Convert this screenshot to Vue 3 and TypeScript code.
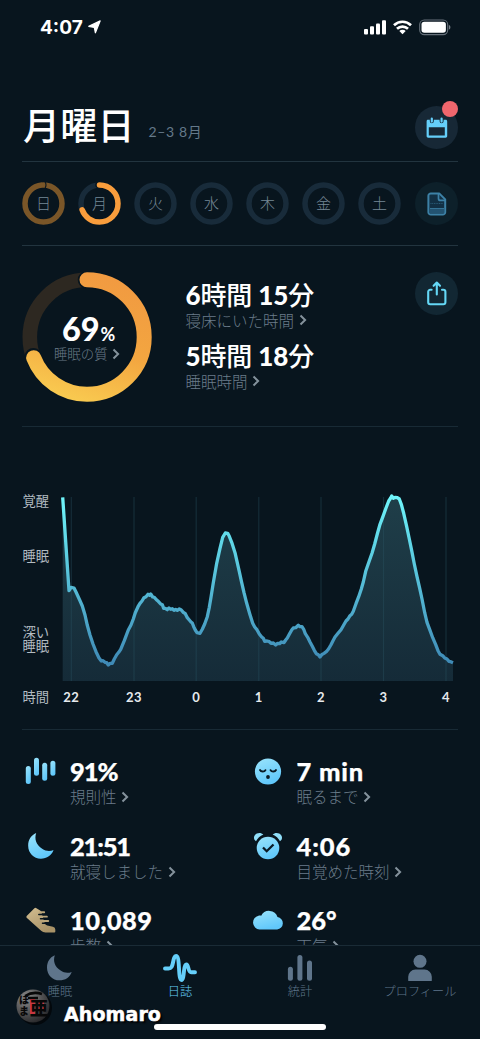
<script setup lang="ts">
interface Day { label: string; progress: number; tone: string }
interface Stat { icon: string; value: string; label: string }

const days: Day[] = [
  { label: '日', progress: 0.98, tone: '#7a5628' },
  { label: '月', progress: 0.69, tone: '#f99d3c' },
  { label: '火', progress: 0, tone: '' },
  { label: '水', progress: 0, tone: '' },
  { label: '木', progress: 0, tone: '' },
  { label: '金', progress: 0, tone: '' },
  { label: '土', progress: 0, tone: '' },
]

const stats: Stat[] = [
  { icon: 'bars', value: '91%', label: '規則性' },
  { icon: 'face', value: '7 min', label: '眠るまで' },
  { icon: 'moon', value: '21:51', label: '就寝しました' },
  { icon: 'alarm', value: '4:06', label: '目覚めた時刻' },
  { icon: 'shoe', value: '10,089', label: '歩数' },
  { icon: 'cloud', value: '26°', label: '天気' },
]

const tabs = [
  { icon: 'moon', label: '睡眠', active: false },
  { icon: 'wave', label: '日誌', active: true },
  { icon: 'stats', label: '統計', active: false },
  { icon: 'person', label: 'プロフィール', active: false },
]

const hours = [
  { x: 71.3, label: '22' }, { x: 134, label: '23' }, { x: 196.2, label: '0' },
  { x: 258.8, label: '1' }, { x: 321, label: '2' }, { x: 383.5, label: '3' }, { x: 446, label: '4' },
]

const ringLength = (r: number) => 2 * Math.PI * r
const dash = (p: number, r: number) => `${p * ringLength(r)} ${ringLength(r)}`

// Sleep depth samples: x and y in thirds of a pixel.
const samples: [number, number][] = [
  [188, 52], [207, 332], [213, 322], [222, 324], [228, 336], [240, 362], [247, 378], [255, 405], [262, 436], [270, 465],
  [279, 492], [288, 515], [297, 534], [304, 543], [309, 542], [315, 547], [320, 548], [325, 555], [330, 550], [337, 550],
  [343, 537], [350, 524], [356, 517], [362, 508], [373, 482], [385, 450], [393, 435], [400, 417], [406, 398], [414, 380],
  [420, 370], [426, 363], [432, 353], [438, 350], [444, 343], [448, 346], [452, 342], [458, 351], [463, 352], [470, 360],
  [475, 364], [482, 372], [487, 374], [491, 385], [496, 385], [502, 389], [507, 384], [512, 388], [517, 386], [522, 391],
  [527, 388], [532, 391], [538, 387], [544, 390], [550, 397], [556, 401], [562, 413], [568, 420], [573, 426], [577, 429],
  [581, 440], [586, 450], [591, 458], [600, 460], [607, 448], [614, 432], [622, 410], [628, 382], [633, 352], [640, 308],
  [650, 250], [660, 205], [668, 172], [676, 159], [683, 160], [688, 169], [695, 187], [705, 218], [718, 275], [725, 308],
  [732, 338], [740, 370], [749, 401], [758, 430], [764, 441], [770, 448], [778, 462], [785, 471], [790, 475], [794, 484],
  [801, 483], [808, 485], [813, 490], [820, 489], [827, 495], [833, 490], [839, 491], [844, 486], [852, 488], [857, 480],
  [862, 474], [868, 463], [875, 450], [880, 444], [887, 443], [895, 436], [900, 440], [906, 440], [911, 448], [916, 461],
  [923, 472], [930, 486], [937, 499], [943, 511], [949, 521], [955, 524], [960, 531], [965, 524], [972, 520], [979, 515],
  [986, 506], [993, 494], [999, 482], [1005, 471], [1014, 460], [1023, 449], [1031, 435], [1038, 423], [1044, 417],
  [1050, 407], [1055, 403], [1060, 394], [1068, 371], [1076, 350], [1084, 327], [1090, 306], [1097, 274], [1107, 245],
  [1116, 220], [1124, 192], [1132, 162], [1140, 133], [1149, 109], [1158, 84], [1166, 63], [1172, 54], [1175, 48],
  [1180, 55], [1185, 52], [1192, 53], [1198, 57], [1204, 73], [1211, 100], [1220, 140], [1228, 177], [1235, 212],
  [1243, 252], [1251, 290], [1259, 325], [1266, 357], [1274, 398], [1281, 427], [1290, 451], [1298, 473], [1307, 494],
  [1314, 512], [1320, 523], [1328, 527], [1334, 534], [1341, 537], [1347, 544], [1352, 545], [1359, 548],
]
const points = samples.map(([x, y]) => `${(x / 3).toFixed(1)},${(y / 3).toFixed(1)}`)
const curve = points.join(' ')
const area = `62.7,201 ${curve} 453,201`
</script>

<template>
  <main class="screen">
    <svg class="defs" width="0" height="0" aria-hidden="true">
      <defs>
        <linearGradient id="sky" x1="0" y1="0" x2="0.4" y2="1">
          <stop offset="0" stop-color="#9be4fb" /><stop offset="1" stop-color="#61c8fb" />
        </linearGradient>
        <linearGradient id="sand" x1="0" y1="0" x2="0.6" y2="1">
          <stop offset="0" stop-color="#d2bd90" /><stop offset="1" stop-color="#a99368" />
        </linearGradient>
      </defs>
    </svg>

    <div class="status">
      <span class="clock">4:07</span>
      <svg class="arrow" width="13" height="14" viewBox="0 0 13 14"><path d="M12.2.9 7.4 12.800 6.300 7.400.700 6.300Z" fill="#fff" stroke="#fff" stroke-width="1.200" stroke-linejoin="round" /></svg>
      <span class="grow"></span>
      <svg width="90" height="18" viewBox="0 0 90 18">
        <g fill="#fff">
          <rect x="0" y="10" width="4" height="5.400" rx="1" /><rect x="6" y="7.300" width="4" height="8.100" rx="1" />
          <rect x="12" y="4.400" width="4" height="11" rx="1" /><rect x="18" y="1.300" width="4" height="14.100" rx="1" />
          <path d="m38.500 15.300-3.200-3.200a4.600 4.600 0 0 1 6.400 0Z" />
        </g>
        <g fill="none" stroke="#fff" stroke-width="2.700">
          <path d="M30 6.200a12.200 12.200 0 0 1 17 0" /><path d="M33 9.800a8 8 0 0 1 11 0" />
        </g>
        <rect x="55.700" y="1" width="28" height="14.600" rx="4.600" fill="none" stroke="#66707a" stroke-width="1.100" />
        <rect x="57.500" y="2.800" width="24.400" height="11" rx="2.800" fill="#fff" />
        <path d="M84.900 6v4.600c1-.4 1.500-1.200 1.500-2.300s-.5-1.900-1.500-2.300Z" fill="#78828b" />
      </svg>
    </div>

    <header class="heading">
      <h1>月曜日</h1>
      <span class="date">2–3 8月</span>
      <span class="grow"></span>
      <button class="round calendar">
        <svg width="22" height="22" viewBox="0 0 22 22">
          <path fill-rule="evenodd" d="M2 2.800h1.800v1.500a2 2 0 0 0 4 0V2.800h5.800v1.500a2 2 0 0 0 4 0V2.800h2c1 0 1.600.7 1.600 1.600v14.700c0 1-.7 1.600-1.600 1.600H2.200c-1 0-1.600-.7-1.600-1.600V4.400C.6 3.500 1 2.800 2 2.800ZM2.800 10.200v8.200h16v-8.200Z" fill="#65cffa" />
          <path d="M5.800 1.600v3M15.600 1.600v3" stroke="#65cffa" stroke-width="2.200" stroke-linecap="round" />
        </svg>
        <i class="badge"></i>
      </button>
    </header>

    <section class="week">
      <div v-for="day in days" :key="day.label" class="day">
        <svg width="43" height="43" viewBox="0 0 43 43">
          <circle cx="21.500" cy="21.500" r="18.500" class="track" />
          <template v-if="day.progress">
            <circle cx="21.500" cy="21.500" r="18.500" fill="none" stroke="#08151e" stroke-width="6" stroke-linecap="round" :stroke-dasharray="dash(day.progress + 0.008, 18.5)" transform="rotate(-94 21.500 21.500)" />
            <circle cx="21.500" cy="21.500" r="18.500" fill="none" :stroke="day.tone" stroke-width="5.500" stroke-linecap="round" :stroke-dasharray="dash(day.progress, 18.5)" transform="rotate(-90 21.500 21.500)" />
          </template>
          <path v-if="day.progress > 0.9" d="M23.100 0c1.200 2 1.200 4 0 6" fill="none" stroke="#08151e" stroke-width="1.100" />
        </svg>
        <span>{{ day.label }}</span>
      </div>
      <button class="round note">
        <svg width="20" height="24" viewBox="0 0 20 24">
          <path d="M3.800 1.400h8.400l6 6v12.800a2.400 2.400 0 0 1-2.400 2.400H3.800a2.400 2.400 0 0 1-2.400-2.400V3.800a2.400 2.400 0 0 1 2.400-2.400Z" fill="#123044" stroke="#3d81a6" stroke-width="2" stroke-linejoin="round" />
          <path d="M11.500 2v4.400a2 2 0 0 0 2 2h4.600" fill="none" stroke="#3d81a6" stroke-width="1.700" />
          <path d="M2.500 16.500h14.700v4.800H2.500Z" fill="#235371" />
          <path d="M3.500 11.500h12.500" stroke="#2e6483" stroke-width=".8" stroke-dasharray="1 .7" /><path d="M3 16.500h14" stroke="#3d81a6" stroke-width=".8" />
        </svg>
      </button>
    </section>

    <section class="summary">
      <div class="quality">
        <svg width="130" height="130" viewBox="0 0 130 130">
          <defs>
            <linearGradient id="sun" gradientUnits="userSpaceOnUse" x1="130" y1="80" x2="5" y2="40">
              <stop offset="0" stop-color="#f19a41" /><stop offset=".55" stop-color="#f3a640" /><stop offset="1" stop-color="#f9ca50" />
            </linearGradient>
          </defs>
          <circle cx="65" cy="65" r="57.200" fill="none" stroke="#2d2821" stroke-width="14.600" />
          <circle cx="65" cy="65" r="57.200" fill="none" stroke="#08151e" stroke-width="17.500" stroke-linecap="round" :stroke-dasharray="dash(0.694, 57.2)" transform="rotate(-90.500 65 65)" />
          <circle cx="65" cy="65" r="57.200" fill="none" stroke="url(#sun)" stroke-width="15" stroke-linecap="round" :stroke-dasharray="dash(0.69, 57.2)" transform="rotate(-90 65 65)" />
        </svg>
        <div class="score">
          <div class="percent">69<small>%</small></div>
          <div class="caption small">睡眠の質<svg class="chev" viewBox="0 0 8 12"><path d="m1.500 1.500 4.600 4.500-4.600 4.500" /></svg></div>
        </div>
      </div>
      <div class="durations">
        <div class="duration"><b>6</b>時間 <b>15</b>分</div>
        <div class="caption">寝床にいた時間<svg class="chev" viewBox="0 0 8 12"><path d="m1.500 1.500 4.600 4.500-4.600 4.500" /></svg></div>
        <div class="duration second"><b>5</b>時間 <b>18</b>分</div>
        <div class="caption">睡眠時間<svg class="chev" viewBox="0 0 8 12"><path d="m1.500 1.500 4.600 4.500-4.600 4.500" /></svg></div>
      </div>
      <span class="grow"></span>
      <button class="round share">
        <svg width="20" height="25" viewBox="0 0 20 25" fill="none" stroke="#65d8f6" stroke-width="2.100" stroke-linecap="round" stroke-linejoin="round">
          <path d="M4.600 8.800H3.200a2 2 0 0 0-2 2v10.400a2 2 0 0 0 2 2h13.200a2 2 0 0 0 2-2V10.800a2 2 0 0 0-2-2H15M9.800 13.500V2M6.600 4.800l3.200-3.200L13 4.800" />
        </svg>
      </button>
    </section>

    <section class="chart">
      <svg width="480" height="240" viewBox="0 0 480 240">
        <defs>
          <linearGradient id="line" gradientUnits="userSpaceOnUse" x1="0" y1="15" x2="0" y2="190">
            <stop offset="0" stop-color="#70f6fb" /><stop offset=".25" stop-color="#60d8e8" /><stop offset=".65" stop-color="#4fadcd" /><stop offset="1" stop-color="#3d86b3" />
          </linearGradient>
          <linearGradient id="fill" x1="0" y1="0" x2="0" y2="1">
            <stop offset="0" stop-color="#1f3e49" /><stop offset="1" stop-color="#152b38" />
          </linearGradient>
        </defs>
        <polygon :points="area" fill="url(#fill)" />
        <path v-for="h in hours" :key="h.label" :d="`M${h.x} 17V201`" stroke="#2a5363" stroke-opacity=".38" stroke-width="1.200" />
        <polyline :points="curve" fill="none" stroke="url(#line)" stroke-width="3.300" stroke-linejoin="round" />
        <g class="axis">
          <text x="22.500" y="25.800">覚醒</text><text x="22.500" y="81">睡眠</text>
          <text x="22.500" y="157">深い</text><text x="22.500" y="171">睡眠</text>
          <text x="22.500" y="221.500">時間</text>
        </g>
        <g class="hours"><text v-for="h in hours" :key="h.label" :x="h.x" y="221.500">{{ h.label }}</text></g>
      </svg>
    </section>

    <section class="stats">
      <div v-for="s in stats" :key="s.icon" class="stat" :class="s.icon">
        <div class="symbol">
          <svg v-if="s.icon === 'bars'" width="32" height="28" viewBox="0 0 32 28" fill="url(#sky)">
            <rect x=".8" y="9" width="5" height="18" rx="2.500" /><rect x="9" y=".8" width="5" height="18" rx="2.500" />
            <rect x="17.200" y="5.700" width="5" height="18" rx="2.500" /><rect x="25.400" y="3.800" width="5" height="15" rx="2.500" />
          </svg>
          <svg v-else-if="s.icon === 'face'" width="32" height="28" viewBox="0 0 32 28">
            <circle cx="16" cy="14.500" r="13.100" fill="url(#sky)" />
            <path d="M8 13c1 2 4.400 2 5.400.2M18.600 13.200c1 1.800 4.400 1.800 5.400-.2" fill="none" stroke="#0a1a25" stroke-width="1.900" stroke-linecap="round" />
            <circle cx="16" cy="20" r="1.900" fill="#0a1a25" />
          </svg>
          <svg v-else-if="s.icon === 'moon'" width="26" height="26" viewBox="84 345 77 78"><path d="M108 345C92 352 84 366 84 383c0 22 17 39 38 39 18 0 33-10 38-26-10 4-23 4-34-4-18-11-24-28-18-47Z" fill="url(#sky)" /></svg>
          <svg v-else-if="s.icon === 'alarm'" width="32" height="28" viewBox="0 0 32 28">
            <circle cx="16" cy="16" r="11.300" fill="url(#sky)" />
            <path d="M4 9.300a4.500 4.500 0 0 1-1.200-6c1.800-2.900 6.200-3.200 8.600-.8C8 3.700 5.500 6.300 4 9.300ZM28 9.300a4.500 4.500 0 0 0 1.200-6c-1.800-2.900-6.200-3.200-8.600-.8 3.400 1.200 5.900 3.800 7.400 6.800Z" fill="#8fdef9" />
            <path d="m11 15.500 3.700 3.700 6.800-6.700" fill="none" stroke="#0a1a25" stroke-width="2.300" />
          </svg>
          <svg v-else-if="s.icon === 'shoe'" width="30" height="26" viewBox="81 69 89 76">
            <path d="M83 95 106 72q3-2 6 0l11 7q3 2 4 6l10 33q2 4 7 5l17 4q7 2 7 9v5q0 3-3 3h-26q-8 0-13-5L83 100q-2-2 0-5Z" fill="url(#sand)" />
            <path d="M122 84h13M127 97h16M131 110h16" stroke="#bca77b" stroke-width="5.500" stroke-linecap="round" />
            <path d="M119 90.500h13M124 103.500h14M130 116.500h12" stroke="#08151e" stroke-width="4.500" stroke-linecap="round" />
          </svg>
          <svg v-else width="32" height="22" viewBox="0 0 32 22"><path d="M7.500 20.500a7 7 0 0 1-1-13.800c1-.2 1.900-.1 2.700.1a8.800 8.800 0 0 1 16.300 1.200 6.300 6.300 0 0 1-.4 12.500Z" fill="url(#sky)" /></svg>
        </div>
        <div>
          <div class="value">{{ s.value }}</div>
          <div class="caption">{{ s.label }}<svg class="chev" viewBox="0 0 8 12"><path d="m1.500 1.500 4.600 4.500-4.600 4.500" /></svg></div>
        </div>
      </div>
    </section>

    <nav class="tabs">
      <div v-for="t in tabs" :key="t.label" class="tab" :class="{ active: t.active }">
        <svg v-if="t.icon === 'moon'" width="26" height="28" viewBox="84 341 80 86"><path d="M108 345C92 352 84 366 84 383c0 22 17 39 38 39 18 0 33-10 38-26-10 4-23 4-34-4-18-11-24-28-18-47Z" fill="currentColor" /></svg>
        <svg v-else-if="t.icon === 'wave'" width="34" height="28" viewBox="0 0 34 28"><path d="M2 14.500h3.500c3 0 3.700-2 4.500-6C10.800 4.300 11.400 2 13 2c2.200 0 2.600 5 3 12 .4 8 .9 12 2.500 12s2-4 2.500-9c.4-4.500.9-6.500 2.400-6.500 2.400 0 1.400 7.700 4.800 7.700H32" fill="none" stroke="currentColor" stroke-width="3.900" stroke-linecap="round" stroke-linejoin="round" /></svg>
        <svg v-else-if="t.icon === 'stats'" width="26" height="28" viewBox="0 0 26 28" fill="currentColor"><rect x=".9" y="12.800" width="5" height="14" rx="2.500" /><rect x="10.400" y="1" width="5" height="25.800" rx="2.500" /><rect x="20" y="6.500" width="5" height="20.300" rx="2.500" /></svg>
        <svg v-else width="26" height="28" viewBox="0 0 26 28" fill="currentColor"><circle cx="13" cy="7.300" r="6.500" /><path d="M1.200 26.500v-3.700a7.300 7.300 0 0 1 7.300-7.300h9a7.300 7.300 0 0 1 7.300 7.300v3.700c0 .4-.2.600-.6.600H1.800c-.4 0-.6-.2-.6-.6Z" /></svg>
        <span>{{ t.label }}</span>
      </div>
    </nav>
    <div class="indicator"></div>
    <div class="credit">
      <svg width="40" height="40" viewBox="0 0 40 40">
        <defs><radialGradient id="orb" cx=".3" cy=".25" r=".8"><stop offset="0" stop-color="#8a8a8a" /><stop offset="1" stop-color="#29292b" /></radialGradient></defs>
        <circle cx="21" cy="22" r="17" fill="#03080c" /><circle cx="19" cy="20" r="16.500" fill="url(#orb)" />
        <path d="M16 12h5v16h-5ZM22 15h8v3h-8ZM22 21h8v3h-8Z" fill="#c8373f" />
        <g class="seal"><text x="16" y="29" font-size="18">亜</text><text x="5" y="18" font-size="10">ほ</text><text x="5" y="29" font-size="10">ま</text></g>
        <path d="M11 10q8-5 17-2M14 12h10" fill="none" stroke="#080808" stroke-width="2.500" />
      </svg>
      <span>Ahomaro</span>
    </div>
  </main>
</template>

<style>
body { margin: 0; background: #08151e; }
</style>

<style scoped>
.screen {
  position: relative; width: 480px; height: 1039px; overflow: hidden; display: flex; flex-direction: column;
  background: #08151e; color: #fff; font-family: Lato, "Noto Sans CJK JP", sans-serif;
}
.screen > * { box-sizing: border-box; flex: none; }
.defs { position: absolute; }
.grow { flex: 1; }
.status { height: 56px; padding: 19px 26.500px 0 40px; display: flex; align-items: flex-start; }
.clock { font: 700 19px/17px Inter, sans-serif; letter-spacing: 0; }
.arrow { margin: 1px 0 0 5px; }
.heading { height: 106px; padding: 50px 0 0; margin: 0 22px; display: flex; align-items: flex-start; border-bottom: 1px solid #22343f; }
h1 { margin: -2px 0 0 1px; font: 500 37px/40px "Noto Sans CJK JP", sans-serif; letter-spacing: .2px; }
.date { margin: 17px 0 0 14px; font-size: 14px; line-height: 18px; letter-spacing: .6px; color: #64798a; }
.round { position: relative; flex: none; width: 43px; height: 43px; padding: 0; border: 0; border-radius: 50%; display: grid; place-items: center; background: #172836; }
.badge { position: absolute; right: 0; top: -5.500px; width: 16px; height: 16px; border-radius: 50%; background: #f0666d; }
.week { height: 83.500px; margin: 0 22px; padding: 20px 0 0; display: flex; gap: 13px; align-items: flex-start; border-bottom: 1px solid #22343f; }
.day { display: grid; width: 43px; height: 43px; }
.day > * { grid-area: 1 / 1; }
.day span { font: 300 15px/41px "Noto Sans CJK JP", sans-serif; text-align: center; color: #768896; }
.track { fill: none; stroke: #182b3a; stroke-width: 5.500; }
.note { background: #0d202a; margin-left: 1px; }
.summary { height: 181.500px; margin: 0 22px; padding-top: 26.500px; display: flex; align-items: flex-start; border-bottom: 1px solid #182a35; }
.quality { display: grid; width: 130px; height: 130px; }
.quality > * { grid-area: 1 / 1; }
.score { padding-top: 41px; text-align: center; }
.percent { font-weight: 900; font-size: 32.500px; line-height: 32px; height: 30px; letter-spacing: -.2px; padding-left: 3px; }
.percent small { font-size: 18px; font-weight: 700; margin-left: 1px; }
.caption { display: flex; align-items: center; height: 20px; font: 300 15.500px/20px "Noto Sans CJK JP", sans-serif; color: #6b7c8a; white-space: nowrap; }
.small { justify-content: center; font-size: 13.400px; line-height: 19px; }
.chev { width: 8px; height: 12px; margin: 1px 0 0 4.500px; fill: none; stroke: #84929c; stroke-width: 2; }
.durations { margin: 7.500px 0 0 33.500px; }
.duration { font: 500 26px/30px Lato, "Noto Sans CJK JP", sans-serif; height: 30px; white-space: pre; letter-spacing: -.2px; }
.duration b { font-weight: 900; }
.second { margin-top: 11px; }
.share { background: #122733; }
.chart { height: 303px; padding-top: 53px; }
.chart > svg { display: block; }
.chart::after { content: ""; display: block; margin: 9px 22px 0; height: 1px; background: #182a35; }
.axis { font: 400 13.300px "Noto Sans CJK JP", sans-serif; fill: #b3bcc2; }
.hours { font: 700 13px Lato, sans-serif; fill: #e6eaed; text-anchor: middle; letter-spacing: .5px; }
.stats { height: 215px; padding: 27px 0 0 22px; display: grid; grid-template-columns: 226.500px 1fr; grid-template-rows: 75px 74px 74px; align-content: start; overflow: hidden; }
.stat { display: flex; align-items: flex-start; height: 60px; }
.symbol { width: 38px; height: 28px; margin-right: 10px; display: grid; place-items: center; }
.value { font-weight: 900; font-size: 25.500px; line-height: 29px; height: 29px; -webkit-text-stroke: .25px #fff; }
.bars .value { letter-spacing: -1px; }
.face .value { letter-spacing: .8px; }
.moon .value { letter-spacing: -1.200px; }
.alarm .value { letter-spacing: .9px; }
.shoe .value { letter-spacing: .4px; }
.shoe .value, .cloud .value { line-height: 28px; }
.tabs { height: 94px; padding-top: 8px; display: grid; grid-template-columns: repeat(4, 1fr); border-top: 1px solid #1a2b36; background: #08151e; }
.tab { display: flex; flex-direction: column; align-items: center; color: #5f758b; font: 300 12.200px/16px "Noto Sans CJK JP", sans-serif; }
.tab svg { flex: none; }
.tab span { margin-top: 1px; }
.active { color: #65cffa; }
.indicator { position: absolute; left: 154px; top: 1024px; width: 172px; height: 6px; border-radius: 3px; background: #fff; }
.credit { position: absolute; left: 14px; top: 986px; display: flex; align-items: center; }
.credit span { margin: 16px 0 0 10px; font: 700 19px/22px "DejaVu Sans", sans-serif; letter-spacing: .1px; -webkit-text-stroke: .5px #fff; text-shadow: 2px 2px 2px #000; }
.seal { font-family: "Noto Sans CJK JP", sans-serif; font-weight: 900; fill: #080808; }
</style>
